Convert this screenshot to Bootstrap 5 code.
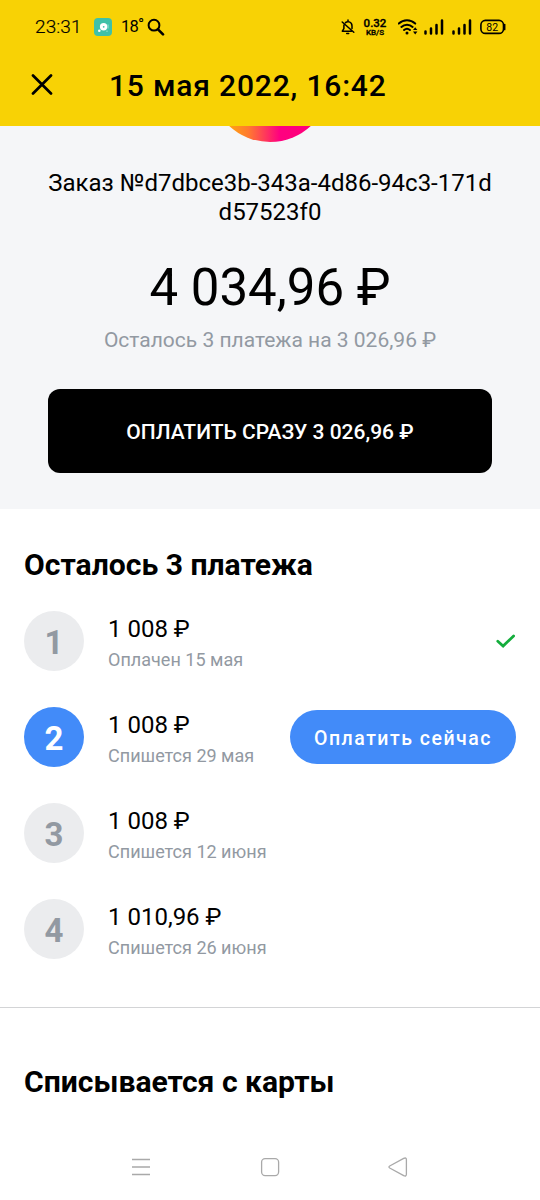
<!DOCTYPE html>
<html lang="ru">
<head>
<meta charset="utf-8">
<meta name="viewport" content="width=device-width, initial-scale=1">
<title>15 мая 2022, 16:42</title>
<link href="https://cdn.jsdelivr.net/npm/bootstrap@5.3.0/dist/css/bootstrap.min.css" rel="stylesheet">
<style>
body{font-family:Roboto,"Noto Sans",sans-serif;color:#000;background:#fff;height:1200px;overflow:hidden}
svg{display:block;flex:none}
.topbar{background:#f8d205;height:126px}
.status{height:54px;padding:0 34px 0 35px}
.clock{font-size:19px;font-weight:300;letter-spacing:.1px;-webkit-text-stroke:.2px #000;width:59px;line-height:54px}
.temp{font-size:16.5px;letter-spacing:-.8px;width:26px;margin-left:9px;line-height:20px}
.temp span{display:inline-block;transform:translateY(-2px)}
.netspeed{font-size:11.5px;font-weight:500;width:26px;margin-left:7px}
.netspeed div{line-height:12px;-webkit-text-stroke:.3px #000}
.netspeed .unit{font-size:8px;line-height:8px}
.appbar{height:62px;padding-left:31px}
.title-text{font-size:30px;font-weight:500;letter-spacing:.82px;margin-left:56px;line-height:62px;padding-top:1px}
.summary{background:#f5f6f8;height:383px}
.logo-clip{height:16px;overflow:hidden}
.logo-ball{width:120px;height:120px;margin-top:-104px;background:linear-gradient(90deg,#ffb800 8%,#ff7a30 32%,#ff0080 58%,#ff0078)}
.order-no{font-size:24px;line-height:28.5px;margin-top:27px}
.total{font-size:51px;line-height:60px;margin-top:32px}
.muted{color:#9299a2}
.rest{font-size:21px;line-height:26px;margin-top:9px}
.pay-all{width:444px;height:84px;border-radius:12px;background:#000;font-size:21px;font-weight:500;margin-top:36px}
.pay-all span{display:block;padding-top:4px}
.heading{font-size:30.1px;font-weight:700;line-height:36px}
.payrow{height:96px;padding:0 24px}
.num{width:60px;height:60px;font-size:33px;font-weight:700;background:#ebecee;color:#9299a2}
.num span{padding-top:3px}
.num.active{background:#428bf9;color:#fff}
.payinfo{padding-top:3px}
.sum{font-size:24px;line-height:30px}
.when{font-size:18.05px;line-height:24px;margin-top:4px}
.pay-now{width:226px;height:54px;background:#428bf9;font-size:19.5px;font-weight:500;letter-spacing:1.5px}
.pay-now span{display:block;padding-top:3px}
.split{height:1px;background:#d3d4d6;margin-top:30px}
</style>
</head>
<body>
<header class="topbar">
  <div class="status d-flex align-items-center">
    <span class="clock">23:31</span>
    <svg width="18" height="18" viewBox="0 0 18 18"><rect width="18" height="18" rx="4" fill="#3fc1a8"/><circle cx="9.6" cy="8.8" r="3.7" fill="#fff"/><circle cx="5.3" cy="12.7" r="1.3" fill="#fff"/><circle cx="9.7" cy="8.8" r=".9" fill="#3fc1a8"/><path d="M14 6.5v4M13 12.5v1.5" stroke="#9be4d5" stroke-width="1"/></svg>
    <div class="temp">18<span>°</span></div>
    <svg width="18" height="18" viewBox="0 0 18 18" fill="none" stroke="#000" stroke-linecap="round"><circle cx="7" cy="7.2" r="5.4" stroke-width="2"/><path d="M11 11.4l5 5" stroke-width="2.6"/></svg>
    <div class="d-flex align-items-center ms-auto">
      <svg width="14" height="18" viewBox="0 0 14 18" fill="none" stroke="#000" stroke-width="1.5" stroke-linecap="round" stroke-linejoin="round"><path d="M4.500 4.600C6 3.100 11 3 11 8v2.600M2.900 7v3.700l-1.600 2.500h9.200M1.200 4l11.600 10.300M5.700 15.600h2M7 2v1"/></svg>
      <div class="netspeed text-center"><div>0.32</div><div class="unit">KB/S</div></div>
      <svg style="margin-left:10px" width="22" height="18" viewBox="0 0 22 18" fill="none" stroke="#000" stroke-width="2" stroke-linecap="round"><path d="M.8 5.600c4.700-4.400 11.700-4.400 16.400 0M3.400 8.900c3.200-3 8-3 11.200 0M6.100 12c1.700-1.500 4.100-1.500 5.800 0"/><circle cx="9" cy="15" r="1.500" fill="#000" stroke="none"/><path d="M15 12l2.200-2.800 2.200 2.800zM15 13.600l2.200 2.800 2.200-2.800z" fill="#000" stroke="none"/></svg>
      <svg style="margin-left:4px" width="20" height="17" viewBox="0 0 20 17"><path d="M1.500 14.500v-2M7 14.500v-5M12.500 14.500v-8.500M18 14.500V1.500" stroke="#000" stroke-width="2.500" stroke-linecap="round"/></svg>
      <svg class="ms-2" width="20" height="17" viewBox="0 0 20 17"><path d="M1.500 14.500v-2M7 14.500v-5M12.500 14.500v-8.500M18 14.500V1.500" stroke="#000" stroke-width="2.500" stroke-linecap="round"/></svg>
      <svg class="ms-2" width="26" height="16" viewBox="0 0 26 16"><rect x=".9" y="1.400" width="22.600" height="13" rx="4.500" fill="none" stroke="#000" stroke-width="1.600"/><path d="M24.600 5.500v5" stroke="#000" stroke-width="1.700" stroke-linecap="round"/><text x="12.200" y="11.700" font-size="10.500" text-anchor="middle">82</text></svg>
    </div>
  </div>
  <div class="appbar d-flex align-items-center">
    <svg width="22" height="22" viewBox="0 0 22 22"><path d="M2 1.500l18 18M20 1.500L2 19.500" stroke="#000" stroke-width="2.700" stroke-linecap="round"/></svg>
    <h1 class="title-text mb-0">15 мая 2022, 16:42</h1>
  </div>
</header>
<main>
  <section class="summary text-center d-flex flex-column align-items-center">
    <div class="logo-clip"><div class="logo-ball rounded-circle"></div></div>
    <div class="order-no">Заказ №d7dbce3b-343a-4d86-94c3-171d<br>d57523f0</div>
    <div class="total">4 034,96 ₽</div>
    <div class="rest muted">Осталось 3 платежа на 3 026,96 ₽</div>
    <button class="pay-all btn text-white p-0 border-0"><span>ОПЛАТИТЬ СРАЗУ 3 026,96 ₽</span></button>
  </section>
  <section>
    <h2 class="heading mb-0 px-4" style="margin-top:38px">Осталось 3 платежа</h2>
    <div style="height:10px"></div>
    <div class="payrow d-flex align-items-center">
      <div class="num rounded-circle d-flex align-items-center justify-content-center"><span>1</span></div>
      <div class="payinfo ms-4"><div class="sum">1 008 ₽</div><div class="when muted">Оплачен 15 мая</div></div>
      <svg class="ms-auto" width="20" height="16" viewBox="0 0 20 16"><path d="M1.800 8.300l5.300 4.700L17.600 3" fill="none" stroke="#14ad3c" stroke-width="2.800" stroke-linecap="round" stroke-linejoin="miter"/></svg>
    </div>
    <div class="payrow d-flex align-items-center">
      <div class="num active rounded-circle d-flex align-items-center justify-content-center"><span>2</span></div>
      <div class="payinfo ms-4"><div class="sum">1 008 ₽</div><div class="when muted">Спишется 29 мая</div></div>
      <button class="pay-now btn rounded-pill text-white ms-auto p-0 border-0"><span>Оплатить сейчас</span></button>
    </div>
    <div class="payrow d-flex align-items-center">
      <div class="num rounded-circle d-flex align-items-center justify-content-center"><span>3</span></div>
      <div class="payinfo ms-4"><div class="sum">1 008 ₽</div><div class="when muted">Спишется 12 июня</div></div>
    </div>
    <div class="payrow d-flex align-items-center">
      <div class="num rounded-circle d-flex align-items-center justify-content-center"><span>4</span></div>
      <div class="payinfo ms-4"><div class="sum">1 010,96 ₽</div><div class="when muted">Спишется 26 июня</div></div>
    </div>
    <div class="split"></div>
    <h2 class="heading mb-0 px-4" style="margin-top:56px">Списывается с карты</h2>
  </section>
</main>
<nav class="d-flex" style="margin:56px 0 0 131px">
  <svg width="277" height="22" viewBox="0 0 277 22" fill="none" stroke="#a9a9a9" stroke-width="1.300" stroke-linejoin="round"><path d="M1 3.500h18M1 11h18M1 18.500h18"/><rect x="130.600" y="2.600" width="17" height="17" rx="3.500"/><path d="M258.700 10l14-7.600q2.700-1.200 2.700 1.300v14.600q0 2.500-2.700 1.300l-14-7.600q-1.500-1 0-2z"/></svg>
</nav>
<script src="https://cdn.jsdelivr.net/npm/bootstrap@5.3.0/dist/js/bootstrap.bundle.min.js"></script>
</body>
</html>
